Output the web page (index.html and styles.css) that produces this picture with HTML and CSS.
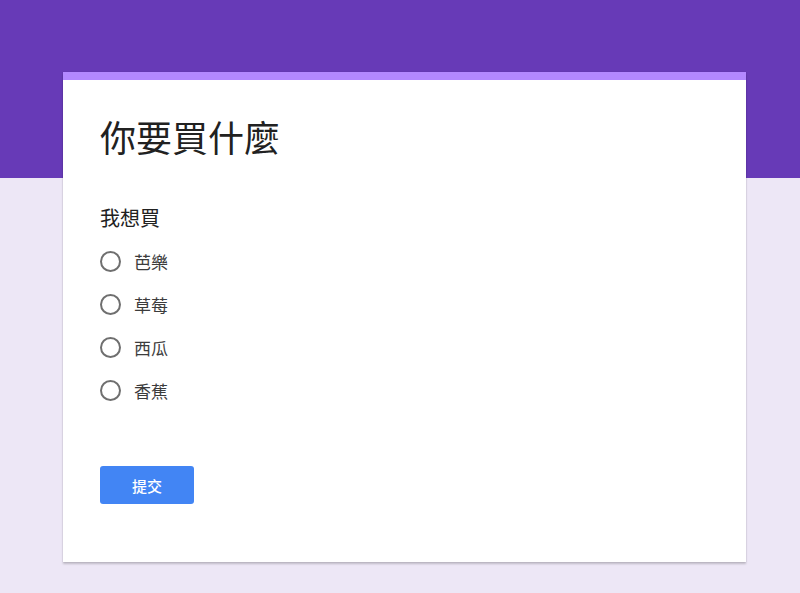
FILE: index.html
```html
<!DOCTYPE html>
<html lang="zh-Hant">
<head>
<meta charset="utf-8">
<link rel="stylesheet" href="styles.css">
</head>
<body>
<div class="header"></div>
<main class="page">
  <section class="card">
    <div class="accent"></div>
    <div class="content">
      <h1 class="title">你要買什麼</h1>
      <div class="question">
        <div class="q-label">我想買</div>
        <label class="option"><span class="radio"></span><span class="opt-text">芭樂</span></label>
        <label class="option"><span class="radio"></span><span class="opt-text">草莓</span></label>
        <label class="option"><span class="radio"></span><span class="opt-text">西瓜</span></label>
        <label class="option"><span class="radio"></span><span class="opt-text">香蕉</span></label>
      </div>
      <button class="submit">提交</button>
    </div>
  </section>
</main>
</body>
</html>
```
FILE: styles.css
```css
html, body {
  margin: 0;
  padding: 0;
}
body {
  background: #ede7f6;
  font-family: Roboto, "Noto Sans CJK TC", sans-serif;
  color: #212121;
  min-height: 593px;
  position: relative;
}
.header {
  height: 178px;
  background: #673ab7;
}
.page {
  margin-top: -106px;
  padding-left: 63px;
  position: relative;
}
.card {
  width: 683px;
  height: 490px;
  background: #fff;
  box-shadow: 0 2px 2px rgba(0,0,0,0.2), 0 0 1px rgba(0,0,0,0.15);
  display: flex;
  flex-direction: column;
}
.accent {
  height: 8px;
  background: #b388ff;
}
.content {
  padding: 38px 37px 0;
  display: flex;
  flex-direction: column;
  align-items: flex-start;
}
.title {
  margin: 0;
  font-size: 36px;
  font-weight: 400;
  line-height: 44px;
  color: #212121;
}
.question {
  margin-top: 44px;
  display: flex;
  flex-direction: column;
}
.q-label {
  font-size: 20px;
  line-height: 26px;
  color: #212121;
  margin-bottom: 8px;
}
.option {
  display: flex;
  align-items: center;
  height: 43px;
  gap: 13px;
}
.radio {
  box-sizing: border-box;
  width: 21px;
  height: 21px;
  border: 2px solid #6f6f6f;
  border-radius: 50%;
}
.opt-text {
  font-size: 17px;
  color: #3c3c3c;
}
.submit {
  margin-top: 54px;
  width: 94px;
  height: 38px;
  border: none;
  border-radius: 3px;
  background: #4285f4;
  color: #fff;
  font-family: Roboto, "Noto Sans CJK TC", sans-serif;
  font-size: 15px;
  font-weight: 500;
  cursor: pointer;
}
```
